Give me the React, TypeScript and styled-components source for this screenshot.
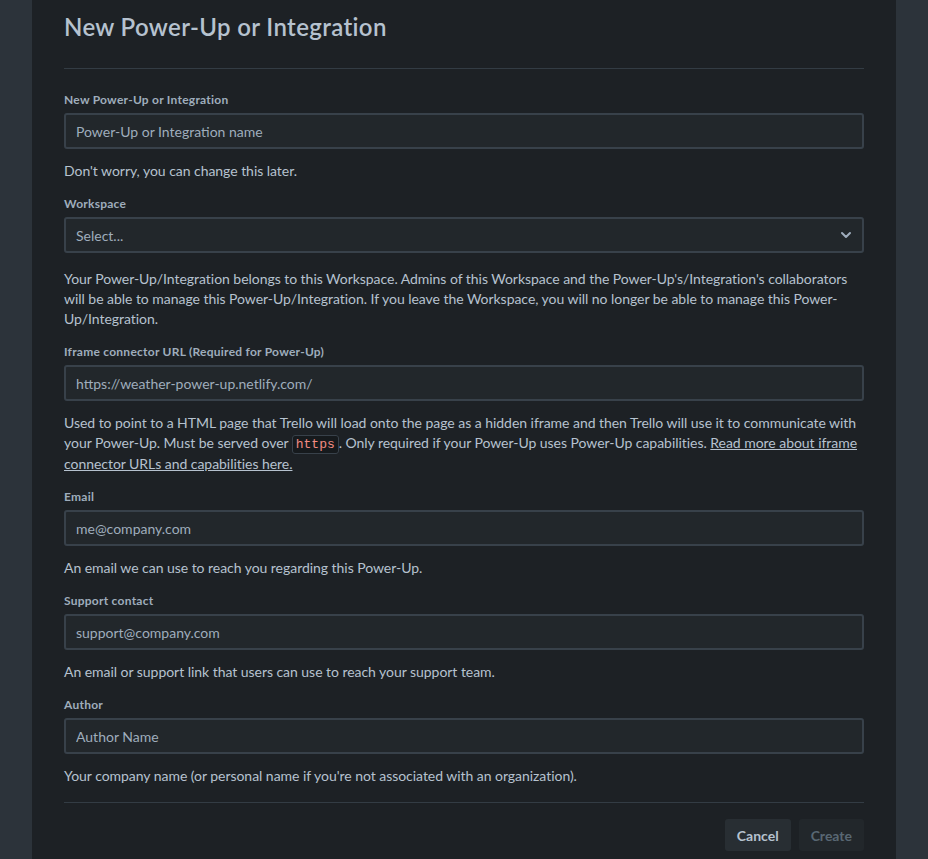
import React from "react";
import styled, { createGlobalStyle } from "styled-components";

const GlobalStyle = createGlobalStyle`
  body {
    margin: 0;
    background-color: #2c333a;
    font-family: "Lato", "Noto Sans", sans-serif;
    color: #b6c2cf;
  }
`;

const fields = [
  {
    label: "Email",
    placeholder: "me@company.com",
    help: "An email we can use to reach you regarding this Power-Up.",
  },
  {
    label: "Support contact",
    placeholder: "support@company.com",
    help: "An email or support link that users can use to reach your support team.",
  },
  {
    label: "Author",
    placeholder: "Author Name",
    help: "Your company name (or personal name if you're not associated with an organization).",
  },
];

const ChevronDown = () => (
  <svg width="16" height="16" viewBox="0 0 16 16" fill="none">
    <path
      d="M4 6l4 4 4-4"
      stroke="#9fadbc"
      strokeWidth="2"
      strokeLinecap="round"
      strokeLinejoin="round"
    />
  </svg>
);

const App: React.FC = () => {
  return (
    <>
      <GlobalStyle />
      <Page>
        <Modal>
          <Title>New Power-Up or Integration</Title>
          <Divider />
          <Form>
            <Field>
              <Label>New Power-Up or Integration</Label>
              <Input placeholder="Power-Up or Integration name" />
              <Help>Don't worry, you can change this later.</Help>
            </Field>

            <Field>
              <Label>Workspace</Label>
              <Select>
                <span>Select...</span>
                <ChevronDown />
              </Select>
              <Help $extra>
                Your Power-Up/Integration belongs to this Workspace. Admins of this
                Workspace and the Power-Up's/Integration's collaborators will be able
                to manage this Power-Up/Integration. If you leave the Workspace, you
                will no longer be able to manage this Power-Up/Integration.
              </Help>
            </Field>

            <Field>
              <Label>Iframe connector URL (Required for Power-Up)</Label>
              <Input placeholder="https://weather-power-up.netlify.com/" />
              <Help>
                Used to point to a HTML page that Trello will load onto the page as a
                hidden iframe and then Trello will use it to communicate with your
                Power-Up. Must be served over <Code>https</Code>. Only required if
                your Power-Up uses Power-Up capabilities.{" "}
                <Link href="#">
                  Read more about iframe connector URLs and capabilities here.
                </Link>
              </Help>
            </Field>

            {fields.map((f) => (
              <Field key={f.label}>
                <Label>{f.label}</Label>
                <Input placeholder={f.placeholder} />
                <Help>{f.help}</Help>
              </Field>
            ))}
          </Form>
          <Footer>
            <Button>Cancel</Button>
            <Button $disabled>Create</Button>
          </Footer>
        </Modal>
      </Page>
    </>
  );
};

const Page = styled.div`
  min-height: 100vh;
  padding: 0 32px;
  overflow: hidden;
`;

const Modal = styled.div`
  background-color: #1d2125;
  padding: 13px 32px 24px;
  min-height: 100vh;
  box-sizing: border-box;
`;

const Title = styled.h1`
  margin: 0;
  font-size: 24px;
  line-height: 28px;
  font-weight: 600;
  letter-spacing: 0.35px;
  color: #b6c2cf;
`;

const Divider = styled.hr`
  border: none;
  height: 1px;
  background-color: #333c44;
  margin: 27px 0 0;
`;

const Form = styled.div`
  display: flex;
  flex-direction: column;
  gap: 15px;
  padding-top: 23px;
`;

const Field = styled.div`
  display: flex;
  flex-direction: column;
`;

const Label = styled.label`
  font-size: 12px;
  line-height: 16px;
  font-weight: 700;
  letter-spacing: 0.25px;
  color: #9fadbc;
  margin-bottom: 5px;
`;

const Input = styled.input`
  height: 36px;
  box-sizing: border-box;
  background-color: #22272b;
  border: 2px solid #38414a;
  border-radius: 3px;
  padding: 0 10px;
  font-family: inherit;
  font-size: 14px;
  color: #b6c2cf;
  outline: none;

  &::placeholder {
    color: #9fadbc;
  }
`;

const Select = styled.div`
  height: 36px;
  box-sizing: border-box;
  background-color: #22272b;
  border: 2px solid #38414a;
  border-radius: 3px;
  padding: 0 8px 0 10px;
  display: flex;
  align-items: center;
  justify-content: space-between;
  font-size: 14px;
  color: #9fadbc;
`;

const Help = styled.p<{ $extra?: boolean }>`
  margin: ${(p) => (p.$extra ? "16px" : "12px")} 0 0;
  font-size: 14px;
  line-height: 20px;
  letter-spacing: -0.04px;
  color: #b6c2cf;
`;

const Code = styled.code`
  font-family: "Liberation Mono", "DejaVu Sans Mono", monospace;
  font-size: 13px;
  line-height: 19px;
  color: #f28b82;
  background-color: #161a1d;
  border: 1px solid #38414a;
  border-radius: 3px;
  padding: 1px 3px;
`;

const Link = styled.a`
  color: #b6c2cf;
  text-decoration: underline;
`;

const Footer = styled.div`
  display: flex;
  justify-content: flex-end;
  gap: 8px;
  margin-top: 16px;
  padding-top: 16px;
  border-top: 1px solid #333c44;
`;

const Button = styled.button<{ $disabled?: boolean }>`
  height: 32px;
  padding: 0 12px;
  border: none;
  border-radius: 3px;
  font-family: inherit;
  font-size: 14px;
  font-weight: 700;
  background-color: ${(p) => (p.$disabled ? "#22272b" : "#282e33")};
  color: ${(p) => (p.$disabled ? "#596773" : "#b6c2cf")};
  cursor: ${(p) => (p.$disabled ? "not-allowed" : "pointer")};
`;

export default App;
